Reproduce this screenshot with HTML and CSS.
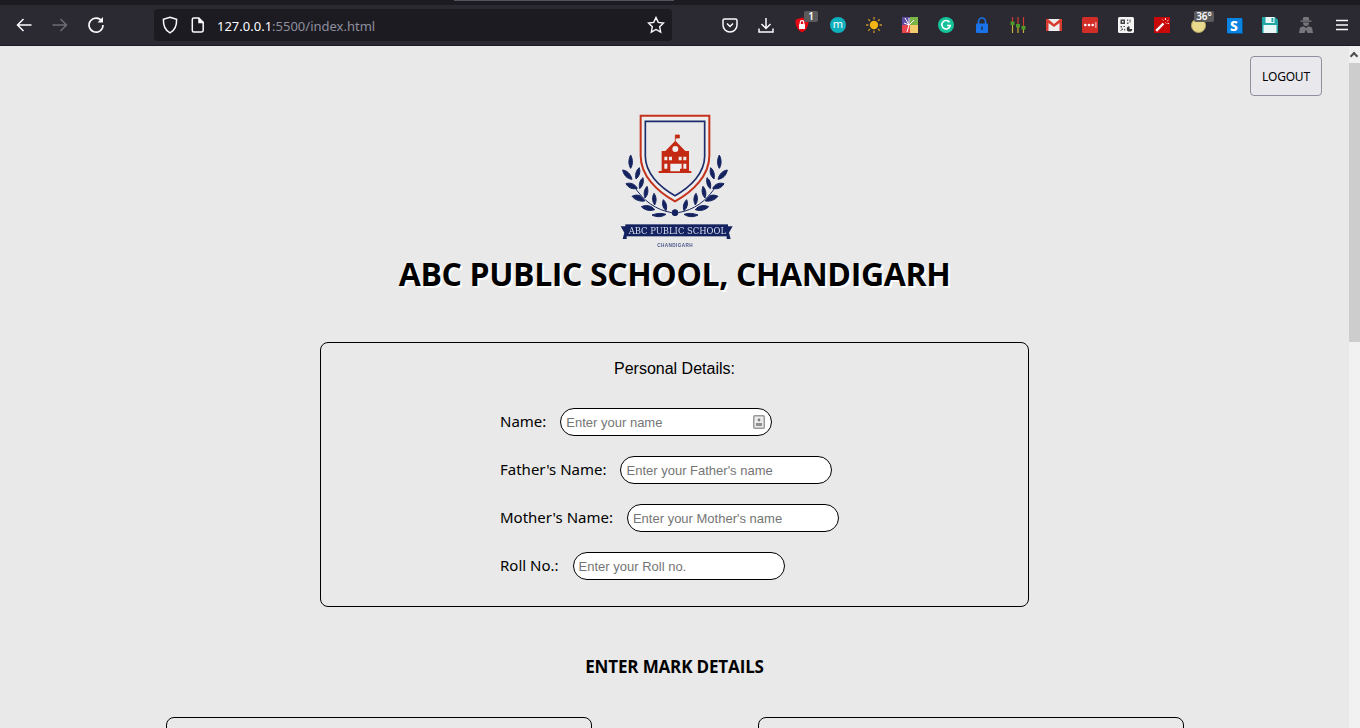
FILE: index.html
```html
<!DOCTYPE html>
<html lang="en">
<head>
    <meta charset="UTF-8">
    <meta name="viewport" content="width=device-width, initial-scale=1.0">
    <title>Student Marks</title>
    <link rel="stylesheet" href="styles.css">
</head>
<body>

<div class="browser-top">
    <div class="tab-strip"><span class="tab-edge"></span></div>
    <div class="toolbar">
        <div class="nav-btns">
            <span class="tool-btn">
                <svg width="18" height="18" viewBox="0 0 18 18" fill="none" stroke="#fbfbfe" stroke-width="1.5"><path d="M16.5 9H2.5M8.5 3L2.5 9l6 6"/></svg>
            </span>
            <span class="tool-btn">
                <svg width="18" height="18" viewBox="0 0 18 18" fill="none" stroke="#6d6c74" stroke-width="1.5"><path d="M1.5 9h14M9.5 3l6 6-6 6"/></svg>
            </span>
            <span class="tool-btn">
                <svg width="18" height="18" viewBox="0 0 18 18" fill="none" stroke="#fbfbfe" stroke-width="1.6"><path d="M15 5.5A7 7 0 1 0 16 9"/><path d="M16 1v5.5h-5.5" fill="#fbfbfe" stroke="none"/></svg>
            </span>
        </div>
        <div class="urlbar">
            <svg class="url-icon" width="16" height="18" viewBox="0 0 16 18" fill="none" stroke="#fbfbfe" stroke-width="1.5"><path d="M8 1.200l6.600 2.200c.2 6.200-1.600 10.800-6.600 13.400C3 14.200 1.200 9.600 1.400 3.400z"/></svg>
            <svg class="url-icon page-icon" width="14" height="16" viewBox="0 0 14 16" fill="none" stroke="#fbfbfe" stroke-width="1.5"><path d="M2.800 1h5l4.400 4.400V13a2 2 0 0 1-2 2H2.800a1.500 1.500 0 0 1-1.500-1.500v-11A1.500 1.500 0 0 1 2.800 1z"/><path d="M8 1v4.500h4.500" fill="#fbfbfe"/></svg>
            <span class="url-text"><span class="url-host">127.0.0.1</span>:5500/index.html</span>
            <svg class="url-star" width="18" height="18" viewBox="0 0 18 18" fill="none" stroke="#fbfbfe" stroke-width="1.4"><path d="M9 1.500l2.300 4.900 5.200.7-3.800 3.700.950 5.300L9 13.500l-4.650 2.600.950-5.300L1.500 7.100l5.200-.7z"/></svg>
        </div>
        <div class="ext-btns">
            <!-- pocket -->
            <span class="tool-btn">
                <svg width="16" height="16" viewBox="0 0 16 16" fill="none" stroke="#fbfbfe" stroke-width="1.500"><path d="M2.500 2h11A1.500 1.500 0 0 1 15 3.500V8a7 7 0 0 1-14 0V3.500A1.500 1.500 0 0 1 2.500 2z"/><path d="M5 6.500L8 9.500l3-3"/></svg>
            </span>
            <!-- download -->
            <span class="tool-btn">
                <svg width="16" height="16" viewBox="0 0 16 16" fill="none" stroke="#fbfbfe" stroke-width="1.500"><path d="M8 1v10M3.500 7L8 11.500 12.500 7M1 11.500V15h14v-3.500"/></svg>
            </span>
            <!-- red shield -->
            <span class="tool-btn">
                <svg width="16" height="16" viewBox="0 0 16 16"><path d="M8 .5l6.500 2.200c.3 6-1.800 10.500-6.500 12.800C3.300 13.200 1.200 8.700 1.500 2.700z" fill="#e30613"/><rect x="5" y="7" width="6" height="5" rx=".6" fill="#fff"/><path d="M6.200 7V5.500a1.800 1.800 0 0 1 3.600 0V7" fill="none" stroke="#fff" stroke-width="1.200"/></svg>
                <span class="badge badge-one">1</span>
            </span>
            <!-- m circle -->
            <span class="tool-btn">
                <span class="round-ext round-m">m</span>
            </span>
            <!-- sun -->
            <span class="tool-btn">
                <svg width="16" height="16" viewBox="0 0 16 16"><circle cx="8" cy="8" r="4.200" fill="#f4b414"/><path d="M8 0v2.500M8 13.500V16M0 8h2.500M13.500 8H16M2.300 2.300l1.800 1.800M11.900 11.900l1.800 1.800M2.300 13.700l1.800-1.800M11.900 4.100l1.800-1.800" stroke="#c8962a" stroke-width="1.300"/></svg>
            </span>
            <!-- colour squares -->
            <span class="tool-btn">
                <svg width="16" height="16" viewBox="0 0 16 16"><rect width="8" height="8" fill="#5c4a9e"/><rect x="8" width="8" height="8" fill="#7ab648"/><rect y="8" width="8" height="8" fill="#e8434f"/><rect x="8" y="8" width="8" height="8" fill="#f3cd6b"/><path d="M7 8L3 1M7 8L7 1M7 8l5-5M7 8L2 6M7 8l-2 7" stroke="#fff" stroke-width="1"/></svg>
            </span>
            <!-- grammarly -->
            <span class="tool-btn">
                <svg width="16" height="16" viewBox="0 0 16 16"><circle cx="8" cy="8" r="8" fill="#15c39a"/><path d="M11.500 5.300A4.200 4.200 0 1 0 12.200 8.500H9" fill="none" stroke="#fff" stroke-width="1.600"/></svg>
            </span>
            <!-- blue lock -->
            <span class="tool-btn">
                <svg width="16" height="16" viewBox="0 0 16 16"><rect x="2" y="6.500" width="12" height="9.500" rx="1" fill="#1a73e8"/><path d="M4.500 7V4.500a3.500 3.500 0 0 1 7 0V7" fill="none" stroke="#1a73e8" stroke-width="1.600"/><rect x="7.200" y="9.500" width="1.600" height="3.500" fill="#16365f"/></svg>
            </span>
            <!-- equalizer -->
            <span class="tool-btn">
                <svg width="16" height="16" viewBox="0 0 16 16" stroke-width="1.200"><path d="M2.500 0v8" stroke="#d13b2c"/><path d="M2.500 8v8" stroke="#c8b23a"/><path d="M8 0v8" stroke="#d13b2c"/><path d="M8 8v8" stroke="#c8b23a"/><path d="M13.500 0v10" stroke="#d13b2c"/><path d="M13.500 10v6" stroke="#c8b23a"/><rect x=".5" y="4.500" width="4" height="3.500" fill="#4c9a2a"/><rect x="6" y="7" width="4" height="3.500" fill="#4c9a2a"/><rect x="11.500" y="9" width="4" height="3.500" fill="#4c9a2a"/></svg>
            </span>
            <!-- gmail -->
            <span class="tool-btn">
                <svg width="16" height="16" viewBox="0 0 16 16"><rect y="2" width="16" height="12" fill="#eeeeee"/><path d="M0 2h2l6 5 6-5h2v12h-2.500V6L8 10 2.500 6v8H0z" fill="#d93a2e"/></svg>
            </span>
            <!-- lastpass -->
            <span class="tool-btn">
                <svg width="16" height="16" viewBox="0 0 16 16"><rect width="16" height="16" rx="1.500" fill="#d32d27"/><circle cx="3.300" cy="8" r="1.300" fill="#fff"/><circle cx="7" cy="8" r="1.300" fill="#fff"/><circle cx="10.700" cy="8" r="1.300" fill="#fff"/><rect x="13.500" y="5" width=".8" height="6" fill="#fff"/></svg>
            </span>
            <!-- qr -->
            <span class="tool-btn">
                <svg width="16" height="16" viewBox="0 0 16 16"><rect width="16" height="16" rx="1.500" fill="#f4f4f4"/><path d="M2.500 2.500h4.500v4.500H2.500zM4 4v1.500h1.500V4z" fill="#444" fill-rule="evenodd"/><path d="M9 2.500h1.200v1.500H9zM11.500 2.500h1v3h-1zM9 5.500h1.500V7H9zM2.500 9h1.500v1.500H2.500zM5.500 9H7v1H5.500zM3.500 11.500H5v1.500H3.500zM6 12h1.200v1.500H6zM2.500 13h1v1h-1z" fill="#555"/><path d="M11.500 9.200a2.700 2.700 0 1 0 2.700 2.700h-2.700z" fill="#333"/></svg>
            </span>
            <!-- wand -->
            <span class="tool-btn">
                <svg width="16" height="16" viewBox="0 0 16 16"><rect width="16" height="16" fill="#c90808"/><path d="M2.200 13.800L9.500 6.500" stroke="#fff" stroke-width="2.400"/><path d="M11.500 1v2M13.200 4.200l1.300-1.300M13.500 6.500H15M8.500 2.500l1 1M11.500 5.500l1 1" stroke="#fbd9d9" stroke-width="1"/></svg>
            </span>
            <!-- weather -->
            <span class="tool-btn">
                <span class="round-ext round-moon"></span>
                <span class="badge badge-temp">36°</span>
            </span>
            <!-- s box -->
            <span class="tool-btn">
                <span class="s-ext">S</span>
            </span>
            <!-- floppy -->
            <span class="tool-btn">
                <svg width="16" height="16" viewBox="0 0 16 16"><path d="M0 0h13l3 3v13H0z" fill="#21a6a8"/><rect x="1.500" y="8" width="13" height="8" fill="#e8f6f6"/><rect x="3.500" y="0" width="9" height="6" fill="#e8f6f6"/><rect x="9.500" y="1" width="1.800" height="4" fill="#21a6a8"/></svg>
            </span>
            <!-- spy -->
            <span class="tool-btn">
                <svg width="14" height="16" viewBox="0 0 14 16" fill="#77767c"><path d="M4.500 0h5l1 3.500h-7z"/><rect x="1.500" y="3.500" width="11" height="1.300"/><path d="M4 5.500h6c0 2.400-1.200 3.500-3 3.500S4 7.900 4 5.500z"/><path d="M0 16l1-5.500 3.500-1.300L7 11l2.500-1.800 3.500 1.300 1 5.500H8.500L7 12.500 5.500 16z"/></svg>
            </span>
            <!-- menu -->
            <span class="tool-btn">
                <svg width="14" height="12" viewBox="0 0 14 12" stroke="#fbfbfe" stroke-width="1.300"><path d="M1 1.500h12M1 6h12M1 10.500h12"/></svg>
            </span>
        </div>
    </div>
</div>

<div class="viewport">
    <div class="page">
        <div class="logout-row">
            <button class="logout-btn">LOGOUT</button>
        </div>

        <svg class="school-logo" width="150" height="150" viewBox="0 0 450 450">
            <path d="M122 32h206v120c0 60-50 108-103 137C172 260 122 212 122 152z" fill="#eeeeee" stroke="#c5321c" stroke-width="6"/>
            <path d="M136 49h178v105c0 50-42 92-89 118-47-26-89-68-89-118z" fill="#e9e9e9" stroke="#1d2c6b" stroke-width="5"/>
            <path d="M226 90v18M226 90h12v9h-12" fill="#c42a12" stroke="#c42a12" stroke-width="2.500"/>
            <path d="M226 107l-30 31h60z" fill="#c42a12"/>
            <rect x="185" y="138" width="82" height="62" fill="#c42a12"/>
            <rect x="176" y="198" width="98" height="6" fill="#c42a12"/>
            <circle cx="226" cy="132" r="9" fill="#eeeeee"/>
            <path d="M193 155h9v11h-9zM207 155h9v11h-9zM236 155h9v11h-9zM250 155h9v11h-9zM193 176h9v15h-9zM236 176h9v15h-9zM250 176h9v15h-9zM211 176h29v23h-29z" fill="#eeeeee"/>
            <g fill="#14235f" stroke="#14235f" stroke-width="3">
                <path d="M92 150c8 16 6 30 0 40-6-10-8-24 0-40z"/>
                <path d="M68 195c14 2 24 12 28 28-15-2-25-12-28-28z"/>
                <path d="M118 188c4 14 0 26-10 34-3-13 0-26 10-34z"/>
                <path d="M78 236c14-4 26 0 34 14-14 4-27-1-34-14z"/>
                <path d="M129 218c3 14-1 26-10 33-3-13 0-25 10-33z"/>
                <path d="M96 274c14-7 28-5 38 14-15 2-29-3-38-14z"/>
                <path d="M141 244c5 13 3 26-6 35-5-12-3-25 6-35z"/>
                <path d="M124 305c15-6 30-4 40 9-15 5-29 2-40-9z"/>
                <path d="M162 265c8 11 8 24 2 35-8-11-8-24-2-35z"/>
                <path d="M156 330c14-6 32-6 42-2-13 9-29 9-42 2z"/>
                <path d="M190 284c10 10 12 22 8 33-10-9-13-21-8-33z"/>
                <path d="M358 150c-8 16-6 30 0 40 6-10 8-24 0-40z"/>
                <path d="M382 195c-14 2-24 12-28 28 15-2 25-12 28-28z"/>
                <path d="M332 188c-4 14 0 26 10 34 3-13 0-26-10-34z"/>
                <path d="M372 236c-14-4-26 0-34 14 14 4 27-1 34-14z"/>
                <path d="M321 218c-3 14 1 26 10 33 3-13 0-25-10-33z"/>
                <path d="M354 274c-14-7-28-5-38 14 15 2 29-3 38-14z"/>
                <path d="M309 244c-5 13-3 26 6 35 5-12 3-25-6-35z"/>
                <path d="M326 305c-15-6-30-4-40 9 15 5 29 2 40-9z"/>
                <path d="M288 265c-8 11-8 24-2 35 8-11 8-24 2-35z"/>
                <path d="M294 330c-14-6-32-6-42-2 13 9 29 9 42 2z"/>
                <path d="M260 284c-10 10-12 22-8 33 10-9 13-21 8-33z"/>
                <circle cx="225" cy="323" r="9"/>
            </g>
            <path d="M100 240c30 50 70 75 115 83M350 240c-30 50-70 75-115 83" fill="none" stroke="#14235f" stroke-width="3"/>
            <path d="M62 364h18v38H68l5-19zM398 364h-18v38h12l-5-19z" fill="#14235f"/>
            <rect x="76" y="358" width="308" height="36" fill="#14235f"/>
            <text class="logo-name" x="86" y="386" textLength="292" lengthAdjust="spacingAndGlyphs">ABC PUBLIC SCHOOL</text>
            <text class="logo-city" x="225" y="425" textLength="106" lengthAdjust="spacing" text-anchor="middle">CHANDIGARH</text>
        </svg>

        <h1 class="school-title">ABC PUBLIC SCHOOL, CHANDIGARH</h1>

        <div class="personal-card">
            <div class="card-title">Personal Details:</div>
            <div class="form-rows">
                <div class="form-row">
                    <label class="form-label">Name:</label>
                    <span class="input-wrap">
                        <input class="text-input" type="text" placeholder="Enter your name">
                        <svg class="contact-icon" width="12" height="14" viewBox="0 0 12 14"><rect x=".75" y=".75" width="10.500" height="12.500" rx="1" fill="#ececec" stroke="#9a9a9a" stroke-width="1.500"/><circle cx="6" cy="5" r="1.400" fill="#7d7d7d"/><rect x="3" y="8" width="6" height="3" fill="#8f8f8f"/></svg>
                    </span>
                </div>
                <div class="form-row">
                    <label class="form-label">Father's Name:</label>
                    <input class="text-input" type="text" placeholder="Enter your Father's name">
                </div>
                <div class="form-row">
                    <label class="form-label">Mother's Name:</label>
                    <input class="text-input" type="text" placeholder="Enter your Mother's name">
                </div>
                <div class="form-row">
                    <label class="form-label">Roll No.:</label>
                    <input class="text-input" type="text" placeholder="Enter your Roll no.">
                </div>
            </div>
        </div>

        <h3 class="marks-title">ENTER MARK DETAILS</h3>

        <div class="marks-grid">
            <div class="marks-card"></div>
            <div class="marks-card"></div>
        </div>
    </div>

    <div class="scrollbar">
        <span class="scroll-up"></span>
        <span class="scroll-thumb"></span>
    </div>
</div>

</body>
</html>
```

FILE: styles.css
```css
html, body {
    height: 100%;
}
body {
    margin: 0;
    overflow: hidden;
    display: flex;
    flex-direction: column;
    background-color: #e9e9e9;
    font-family: "Noto Sans", sans-serif;
}

/* browser bar */
.browser-top {
    flex: none;
    height: 46px;
    background-color: #1c1b22;
}
.tab-strip {
    height: 5px;
    position: relative;
}
.tab-edge {
    position: absolute;
    left: 454px;
    top: 0;
    width: 220px;
    height: 1px;
    background-color: #55545c;
}
.toolbar {
    height: 40px;
    background-color: #2b2a33;
    display: flex;
    align-items: center;
    padding-left: 6px;
}
.nav-btns, .ext-btns {
    display: flex;
}
.tool-btn {
    position: relative;
    width: 36px;
    height: 32px;
    display: flex;
    align-items: center;
    justify-content: center;
}
.urlbar {
    width: 518px;
    height: 32px;
    margin: 0 40px;
    background-color: #1c1b22;
    border-radius: 4px;
    display: flex;
    align-items: center;
    box-sizing: border-box;
    padding: 0 7px 0 8px;
    color: #8f8f9d;
}
.page-icon {
    margin-left: 13px;
}
.url-text {
    margin: 2px 0 0 12px;
    font-size: 13px;
    flex: 1;
}
.url-host {
    color: #fbfbfe;
}
.badge {
    position: absolute;
    top: 2px;
    background-color: #5b5b5b;
    color: #fbfbfe;
    font-size: 10px;
    font-weight: 600;
    line-height: 11px;
    height: 11px;
    border-radius: 2px;
    text-align: center;
}
.badge-one {
    left: 20px;
    width: 14px;
}
.badge-temp {
    left: 14px;
    width: 20px;
}
.round-ext {
    width: 16px;
    height: 16px;
    border-radius: 50%;
    display: block;
}
.round-m {
    background-color: #0fb0bd;
    color: #fff;
    font-size: 11px;
    line-height: 14px;
    text-align: center;
}
.round-moon {
    width: 13px;
    height: 13px;
    background-color: #e9d98a;
    border: 1px solid #b8ab6a;
}
.s-ext {
    width: 15px;
    height: 15px;
    background-color: #0a84e0;
    box-shadow: 1px 1px 0 #07518a;
    color: #fff;
    font-size: 14px;
    font-weight: 800;
    line-height: 15px;
    text-align: center;
}

/* page */
.viewport {
    flex: 1;
    min-height: 0;
    display: flex;
}
.page {
    flex: 1;
    min-width: 0;
    overflow: hidden;
}
.scrollbar {
    flex: none;
    width: 11px;
    background-color: #f1f1f1;
    display: flex;
    flex-direction: column;
}
.scroll-up {
    height: 17px;
    position: relative;
}
.scroll-up::before {
    content: "";
    position: absolute;
    left: 2px;
    top: 7px;
    width: 4px;
    height: 4px;
    border-left: 2px solid #505050;
    border-top: 2px solid #505050;
    transform: rotate(45deg);
}
.scroll-thumb {
    height: 279px;
    background-color: #cdcdcd;
}
.logout-row {
    display: flex;
    justify-content: flex-end;
    padding: 10px 27px 0 0;
}
.logout-btn {
    width: 72px;
    height: 40px;
    background-color: #e9e9ed;
    border: 1px solid #8f8f9d;
    border-radius: 4px;
    color: #000;
    font-family: "Noto Sans", sans-serif;
    font-size: 12px;
    letter-spacing: -0.2px;
    padding: 0;
}
.school-logo {
    display: block;
    margin: 9px auto 0;
    filter: blur(0.3px);
}
.logo-name {
    font-family: "DejaVu Serif", serif;
    font-size: 25px;
    fill: #d8dcef;
}
.logo-city {
    font-family: "Liberation Sans", sans-serif;
    font-size: 14px;
    font-weight: bold;
    fill: #4a5788;
}
.school-title {
    margin: -1px 0 0;
    text-align: center;
    font-family: "Open Sans", sans-serif;
    font-size: 32px;
    line-height: 40px;
    font-weight: 700;
    letter-spacing: -0.38px;
    color: #000;
    text-shadow: 2px 2px 0 #fff;
}
.personal-card {
    box-sizing: border-box;
    width: 709px;
    height: 265px;
    margin: 48px auto 0;
    border: 1px solid #000;
    border-radius: 8px;
    padding-top: 16px;
}
.card-title {
    font-family: "Liberation Sans", sans-serif;
    font-size: 16px;
    line-height: 20px;
    text-align: center;
}
.form-rows {
    margin-top: 29px;
    padding-left: 179px;
    display: flex;
    flex-direction: column;
    gap: 20px;
}
.form-row {
    display: flex;
    align-items: center;
    height: 28px;
}
.form-label {
    font-size: 15px;
    margin-right: 14px;
    padding-bottom: 2px;
}
.input-wrap {
    position: relative;
    display: flex;
}
.text-input {
    box-sizing: border-box;
    width: 212px;
    height: 28px;
    background-color: #fff;
    border: 1px solid #000;
    border-radius: 14px;
    padding: 0 5px;
    font-family: "Liberation Sans", sans-serif;
    font-size: 13px;
}
.contact-icon {
    position: absolute;
    right: 7px;
    top: 7px;
}
.marks-title {
    margin: 49px 0 0;
    text-align: center;
    font-family: "Open Sans", sans-serif;
    font-size: 17px;
    line-height: 22px;
    font-weight: 700;
    letter-spacing: -0.15px;
}
.marks-grid {
    display: flex;
    justify-content: center;
    gap: 166px;
    margin-top: 39px;
}
.marks-card {
    box-sizing: border-box;
    width: 426px;
    height: 260px;
    border: 1px solid #000;
    border-radius: 8px;
}
```
